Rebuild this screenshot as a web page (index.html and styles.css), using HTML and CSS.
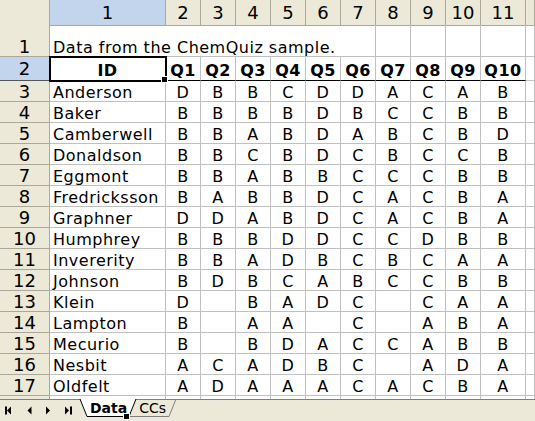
FILE: index.html
```html
<!DOCTYPE html>
<html lang="en">
<head>
    <meta charset="UTF-8" />
    <title>ChemQuiz - Data</title>
    <link rel="stylesheet" href="styles.css">
</head>
<body>
    <div class="sheet">
        <!-- Column headers (R1C1 style) -->
        <div class="row cols">
            <div class="corner"></div>
            <div class="ch sel">1</div>
            <div class="ch">2</div>
            <div class="ch">3</div>
            <div class="ch">4</div>
            <div class="ch">5</div>
            <div class="ch">6</div>
            <div class="ch">7</div>
            <div class="ch">8</div>
            <div class="ch">9</div>
            <div class="ch">10</div>
            <div class="ch">11</div>
            <div class="ch"></div>
        </div>

        <div class="row r1">
            <div class="rh">1</div>
            <div class="title">Data from the ChemQuiz sample.</div>
            <div></div><div></div><div></div><div></div><div></div>
        </div>

        <div class="row r2">
            <div class="rh sel">2</div>
            <div class="q active">ID</div>
            <div class="q">Q1</div>
            <div class="q">Q2</div>
            <div class="q">Q3</div>
            <div class="q">Q4</div>
            <div class="q">Q5</div>
            <div class="q">Q6</div>
            <div class="q">Q7</div>
            <div class="q">Q8</div>
            <div class="q">Q9</div>
            <div class="q">Q10</div>
            <div></div>
        </div>

        <div class="row"><div class="rh">3</div><div class="name">Anderson</div><div>D</div><div>B</div><div>B</div><div>C</div><div>D</div><div>D</div><div>A</div><div>C</div><div>A</div><div>B</div><div></div></div>
        <div class="row"><div class="rh">4</div><div class="name">Baker</div><div>B</div><div>B</div><div>B</div><div>B</div><div>D</div><div>B</div><div>C</div><div>C</div><div>B</div><div>B</div><div></div></div>
        <div class="row"><div class="rh">5</div><div class="name">Camberwell</div><div>B</div><div>B</div><div>A</div><div>B</div><div>D</div><div>A</div><div>B</div><div>C</div><div>B</div><div>D</div><div></div></div>
        <div class="row"><div class="rh">6</div><div class="name">Donaldson</div><div>B</div><div>B</div><div>C</div><div>B</div><div>D</div><div>C</div><div>B</div><div>C</div><div>C</div><div>B</div><div></div></div>
        <div class="row"><div class="rh">7</div><div class="name">Eggmont</div><div>B</div><div>B</div><div>A</div><div>B</div><div>B</div><div>C</div><div>C</div><div>C</div><div>B</div><div>B</div><div></div></div>
        <div class="row"><div class="rh">8</div><div class="name">Fredricksson</div><div>B</div><div>A</div><div>B</div><div>B</div><div>D</div><div>C</div><div>A</div><div>C</div><div>B</div><div>A</div><div></div></div>
        <div class="row"><div class="rh">9</div><div class="name">Graphner</div><div>D</div><div>D</div><div>A</div><div>B</div><div>D</div><div>C</div><div>A</div><div>C</div><div>B</div><div>A</div><div></div></div>
        <div class="row"><div class="rh">10</div><div class="name">Humphrey</div><div>B</div><div>B</div><div>B</div><div>D</div><div>D</div><div>C</div><div>C</div><div>D</div><div>B</div><div>B</div><div></div></div>
        <div class="row"><div class="rh">11</div><div class="name">Invererity</div><div>B</div><div>B</div><div>A</div><div>D</div><div>B</div><div>C</div><div>B</div><div>C</div><div>A</div><div>A</div><div></div></div>
        <div class="row"><div class="rh">12</div><div class="name">Johnson</div><div>B</div><div>D</div><div>B</div><div>C</div><div>A</div><div>B</div><div>C</div><div>C</div><div>B</div><div>B</div><div></div></div>
        <div class="row"><div class="rh">13</div><div class="name">Klein</div><div>D</div><div></div><div>B</div><div>A</div><div>D</div><div>C</div><div></div><div>C</div><div>A</div><div>A</div><div></div></div>
        <div class="row"><div class="rh">14</div><div class="name">Lampton</div><div>B</div><div></div><div>A</div><div>A</div><div></div><div>C</div><div></div><div>A</div><div>B</div><div>A</div><div></div></div>
        <div class="row"><div class="rh">15</div><div class="name">Mecurio</div><div>B</div><div></div><div>B</div><div>D</div><div>A</div><div>C</div><div>C</div><div>A</div><div>B</div><div>B</div><div></div></div>
        <div class="row"><div class="rh">16</div><div class="name">Nesbit</div><div>A</div><div>C</div><div>A</div><div>D</div><div>B</div><div>C</div><div></div><div>A</div><div>D</div><div>A</div><div></div></div>
        <div class="row"><div class="rh">17</div><div class="name">Oldfelt</div><div>A</div><div>D</div><div>A</div><div>A</div><div>A</div><div>C</div><div>A</div><div>C</div><div>B</div><div>A</div><div></div></div>
        <!-- row 18 only peeks out above the tab strip -->
        <div class="row"><div class="rh"></div><div></div><div></div><div></div><div></div><div></div><div></div><div></div><div></div><div></div><div></div><div></div><div></div></div>
    </div>

    <!-- Sheet tab strip -->
    <div class="tabbar">
        <svg class="nav" width="78" height="21" viewBox="0 0 78 21">
            <rect x="5" y="6.5" width="2" height="8" />
            <polygon points="11,6.5 11,14.5 7,10.5" />
            <polygon points="31.5,6.5 31.5,14.5 27.5,10.5" />
            <polygon points="46,6.5 46,14.5 50,10.5" />
            <polygon points="65,6.5 65,14.5 69,10.5" />
            <rect x="70" y="6.5" width="2" height="8" />
        </svg>
        <div class="tabs">
            <svg class="tab-shapes" width="110" height="19" viewBox="0 0 110 19">
                <polyline points="51,17.5 91,17.5 98,0" fill="none" stroke="#808080" />
                <polygon points="2,0 9,17.5 51,17.5 58,0" fill="#fff" />
                <polyline points="2,0 9,17.5 51,17.5 58,0" fill="none" stroke="#000" />
            </svg>
            <span class="tab active">Data</span>
            <span class="tab">CCs</span>
        </div>
    </div>
</body>
</html>
```

FILE: styles.css
```css
/* Basic reset */
* {
    margin: 0;
    padding: 0;
    box-sizing: border-box;
}

body {
    width: 535px;
    height: 421px;
    overflow: hidden;
    display: flex;
    flex-direction: column;
    font-family: "DejaVu Sans", Verdana, sans-serif;
    color: #000;
    background-color: #fff;
}

/* Worksheet grid */
.sheet {
    flex: none;
    height: 399px;
    overflow: hidden;
}

.row {
    display: grid;
    grid-template-columns: 50px 116px repeat(9, 35px) 45px 1fr;
    height: 21px;
}

.row > div {
    display: flex;
    align-items: flex-end;
    justify-content: center;
    border-right: 1px solid #c0c0c0;
    border-bottom: 1px solid #c0c0c0;
    font-size: 16px;
    line-height: 16px;
    letter-spacing: 0.5px;
    white-space: nowrap;
}

.row.cols { height: 25px; }
.row.r1   { height: 32px; }
.row.r2   { height: 24px; }

/* Headers */
.row > .corner,
.row > .ch,
.row > .rh {
    background-color: #ece9d8;
    border-color: #aca899;
    font-size: 18px;
    letter-spacing: 0;
}

.row > .ch {
    align-items: center;
    line-height: 24px;
    padding-top: 1px;
}

.row > .rh {
    padding-bottom: 1px;
}

.row > .sel {
    background-color: #c3d4ed;
}

.row > .rh.sel {
    padding-bottom: 3px;
    border-bottom-color: #555;
}

/* Cell contents */
.row > .title {
    grid-column: span 7;
    justify-content: flex-start;
    padding-left: 3px;
}

.row > .name {
    justify-content: flex-start;
    padding-left: 3px;
}

.row > .q {
    font-weight: bold;
    padding-bottom: 1px;
    border-bottom-color: #000;
}

/* Active cell with fill handle */
.row > .active {
    position: relative;
    z-index: 1;
    outline: 2px solid #000;
    outline-offset: -1px;
}

.active::after {
    content: "";
    position: absolute;
    right: -3px;
    bottom: -3px;
    width: 5px;
    height: 5px;
    background-color: #000;
    border: 1px solid #fff;
}

/* Tab strip */
.tabbar {
    flex: none;
    height: 22px;
    display: flex;
    background-color: #ece9d8;
    border-top: 1px solid #808080;
}

.nav {
    flex: none;
    fill: #000;
}

.tabs {
    position: relative;
    display: flex;
    align-items: flex-start;
    padding-left: 12px;
}

.tab-shapes {
    position: absolute;
    left: 0;
    top: -1px;
}

.tab {
    position: relative;
    font-size: 14px;
    line-height: 17px;
}

.tab.active {
    font-weight: bold;
    margin-right: 12px;
}
```
